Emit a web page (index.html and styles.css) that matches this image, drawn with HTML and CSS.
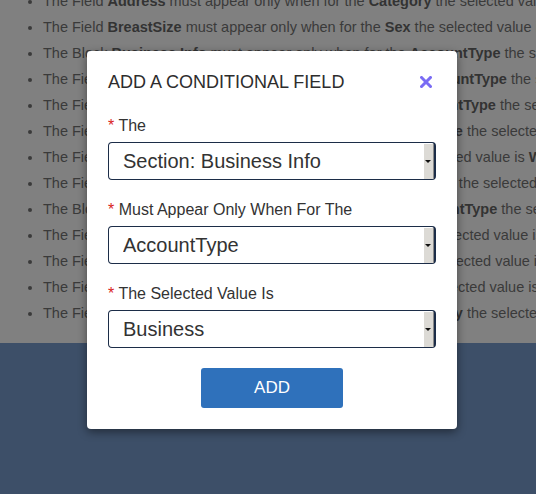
FILE: index.html
```html
<!doctype html>
<html lang="en">
	<head>
		<meta charset="utf-8">
		<title>Conditional fields</title>
		<link rel="stylesheet" href="styles.css">
	</head>
	<body>
		<div class="page">
			<ul class="rules">
				<li>The Field <b>Address</b> must appear only when for the <b>Category</b> the selected value is <b>Home</b></li>
				<li>The Field <b>BreastSize</b> must appear only when for the <b>Sex</b> the selected value is <b>Female</b></li>
				<li>The Block <b>Business Info</b> must appear only when for the <b>AccountType</b> the selected value is <b>Business</b></li>
				<li>The Field <b>CompanyName</b> must appear only when for the <b>AccountType</b> the selected value is <b>Business</b></li>
				<li>The Field <b>VATIdNumber</b> must appear only when for the <b>AccountType</b> the selected value is <b>Business</b></li>
				<li>The Field <b>SpouseName</b> must appear only when for the <b>Marriage</b> the selected value is <b>Yes</b></li>
				<li>The Field <b>Colors</b> must appear only when for the <b>Type</b> the selected value is <b>Wagon</b></li>
				<li>The Field <b>Children</b> must appear only when for the <b>HasChildren</b> the selected value is <b>Yes</b></li>
				<li>The Block <b>Personal Info</b> must appear only when for the <b>AccountType</b> the selected value is <b>Personal</b></li>
				<li>The Field <b>AgeGroup</b> must appear only when for the <b>Sex</b> the selected value is <b>Male</b></li>
				<li>The Field <b>Phone</b> must appear only when for the <b>Contact</b> the selected value is <b>Phone</b></li>
				<li>The Field <b>Email</b> must appear only when for the <b>Contact</b> the selected value is <b>Email</b></li>
				<li>The Field <b>RegionDetails</b> must appear only when for the <b>Country</b> the selected value is <b>Other</b></li>
			</ul>
			<div class="footer"></div>
		</div>

		<div class="modal">
			<div class="modal-head">
				<h2 class="modal-title">ADD A CONDITIONAL FIELD</h2>
				<svg class="close" width="12" height="12" viewBox="0 0 12 12">
					<path d="M1.5 1.5 L10.5 10.5 M10.5 1.5 L1.5 10.5" stroke="#7a6cf4" stroke-width="3" stroke-linecap="square"/>
				</svg>
			</div>

			<div class="field">
				<label class="field-label"><span class="req">*</span> The</label>
				<span class="select-wrap">
					<select class="select"><option>Section: Business Info</option></select>
				</span>
			</div>
			<div class="field">
				<label class="field-label"><span class="req">*</span> Must Appear Only When For The</label>
				<span class="select-wrap">
					<select class="select"><option>AccountType</option></select>
				</span>
			</div>
			<div class="field">
				<label class="field-label"><span class="req">*</span> The Selected Value Is</label>
				<span class="select-wrap">
					<select class="select"><option>Business</option></select>
				</span>
			</div>

			<div class="actions">
				<button class="btn-add">ADD</button>
			</div>
		</div>
	</body>
</html>
```

FILE: styles.css
```css
html, body { margin: 0; height: 100%; }
body { background: #808080; font-family: "Liberation Sans", Arial, sans-serif; overflow: hidden; }

.page { display: flex; flex-direction: column; min-height: 100%; }

/* the list behind the dialog is scrolled a little */
.rules {
	margin: -12px 0 0;
	padding: 0 0 17px 43px;
	list-style: disc;
	font-size: 14.5px;
	line-height: 26px;
	color: #3a3a3a;
	white-space: nowrap;
	overflow: hidden;
}
.rules b { color: #333; }
.footer { flex: 1; background: #3d4f68; }

.modal {
	position: absolute;
	left: 87px;
	top: 51px;
	width: 370px;
	box-sizing: border-box;
	padding: 21px;
	background: #fff;
	border-radius: 4px;
	box-shadow: 0 3px 10px rgba(0,0,0,0.45);
}

.modal-head { display: flex; align-items: center; justify-content: space-between; height: 20px; margin-bottom: 25px; }
.modal-title { margin: 0; font-size: 18px; font-weight: normal; line-height: 20px; color: #2d2d2d; }
.close { display: block; margin-right: 4px; }

.field + .field { margin-top: 21px; }
.field-label { display: block; font-size: 16px; line-height: 18px; color: #333; margin-bottom: 7px; }
.req { color: #d9251d; }

.select-wrap { display: block; position: relative; }
.select {
	display: block;
	width: 100%;
	height: 38px;
	box-sizing: border-box;
	margin: 0;
	padding: 0 0 0 14px;
	border: 1px solid #1c2d48;
	border-right-width: 2px;
	border-radius: 4px;
	background: #fff;
	font-family: inherit;
	font-size: 20px;
	color: #333;
	-webkit-appearance: none;
	appearance: none;
	outline: none;
}
/* old style drop button on the right */
.select-wrap::after {
	content: "";
	position: absolute;
	top: 2px;
	bottom: 1px;
	right: 2px;
	width: 9px;
	background: #dcdad5;
	border-right: 1px solid #8a8a8a;
	pointer-events: none;
}
.select-wrap::before {
	content: "";
	position: absolute;
	z-index: 1;
	right: 5px;
	top: 18px;
	border-left: 3px solid transparent;
	border-right: 3px solid transparent;
	border-top: 3px solid #111;
	pointer-events: none;
}

.actions { display: flex; justify-content: center; padding-top: 20px; }
.btn-add {
	width: 142px;
	height: 40px;
	border: 0;
	border-radius: 3px;
	background: #2f71bb;
	color: #fff;
	font-family: inherit;
	font-size: 17px;
}
```
